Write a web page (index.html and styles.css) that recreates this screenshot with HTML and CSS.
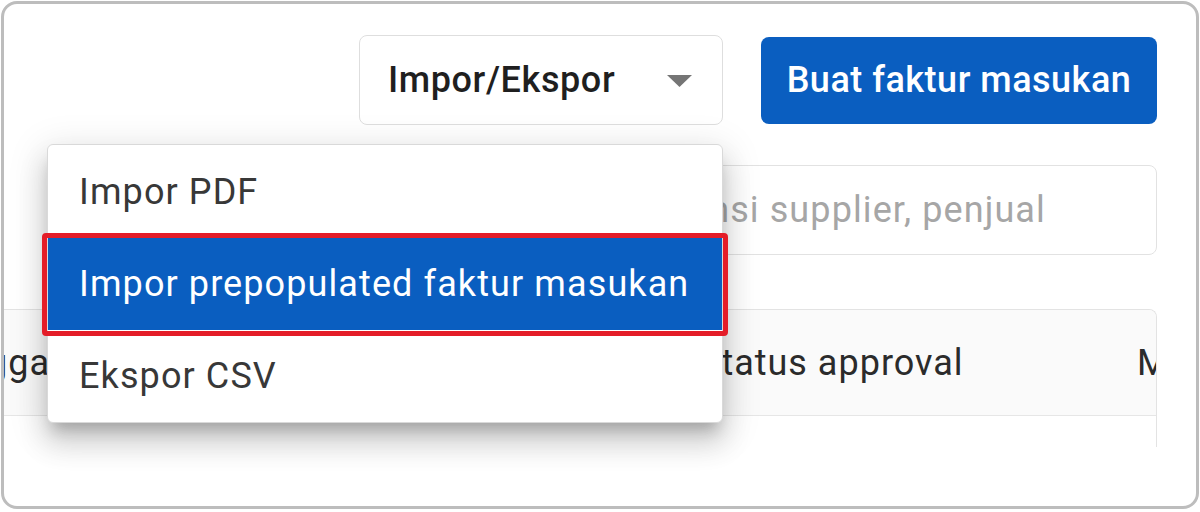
FILE: index.html
```html
<!DOCTYPE html>
<html lang="id">
<head>
<meta charset="utf-8">
<title>Faktur masukan</title>
<link rel="stylesheet" href="styles.css">
</head>
<body>
<div class="frame">
  <div class="toolbar">
    <div class="select">
      <span class="select-label">Impor/Ekspor</span>
      <svg class="caret" width="25" height="12" viewBox="0 0 25 12"><path d="M0 0H25L12.5 12Z" fill="#757575"/></svg>
    </div>
    <button class="primary">Buat faktur masukan</button>
  </div>
  <div class="search-row">
    <input class="search" type="text" placeholder="Cari nomor faktur, referensi supplier, penjual">
  </div>
  <div class="table">
    <div class="table-inner">
      <div class="thead">
        <div class="th">Tanggal</div>
        <div class="th">Nomor faktur</div>
        <div class="th">Status approval</div>
        <div class="th">Metode</div>
      </div>
      <div class="trow">
        <div class="td"></div>
        <div class="td"></div>
        <div class="td"></div>
        <div class="td"></div>
      </div>
    </div>
  </div>
  <ul class="menu">
    <li class="menu-item">Impor PDF</li>
    <li class="menu-item active">Impor prepopulated faktur masukan</li>
    <li class="menu-item">Ekspor CSV</li>
  </ul>
</div>
</body>
</html>
```

FILE: styles.css
```css
* { box-sizing: border-box; }

html, body {
  margin: 0;
  padding: 0;
  background: #ffffff;
}

body {
  font-family: Roboto, "Noto Sans", "Liberation Sans", sans-serif;
  color: #333333;
}

.frame {
  position: relative;
  margin: 1px;
  width: 1198px;
  height: 508px;
  border: 3px solid #bdbdbd;
  border-radius: 16px;
  background: #ffffff;
  overflow: hidden;
  padding-right: 39px;
}

.toolbar {
  display: flex;
  justify-content: flex-end;
  align-items: center;
  gap: 38px;
  padding-top: 31px;
}

.select {
  width: 364px;
  height: 90px;
  border: 1px solid #dedede;
  border-radius: 8px;
  background: #ffffff;
  display: flex;
  align-items: center;
  justify-content: space-between;
  padding: 0 30px 0 28px;
}

.select-label {
  font-size: 36px;
  font-weight: 500;
  letter-spacing: 0.6px;
  color: #1f1f1f;
}

.caret { display: block; margin-top: 2px; }

.primary {
  width: 396px;
  height: 87px;
  border: none;
  border-radius: 8px;
  background: #0a5ec0;
  color: #ffffff;
  font-family: Roboto, "Noto Sans", "Liberation Sans", sans-serif;
  font-size: 36px;
  font-weight: 500;
  letter-spacing: 0.5px;
  padding: 0;
}

.search-row {
  display: flex;
  justify-content: flex-end;
  margin-top: 40px;
}

.search {
  width: 908px;
  height: 90px;
  border: 1px solid #e2e2e2;
  border-radius: 8px;
  padding: 0 0 0 44px;
  font-family: Roboto, "Noto Sans", "Liberation Sans", sans-serif;
  font-size: 36px;
  letter-spacing: 1.1px;
  color: #333333;
  background: #ffffff;
  outline: none;
}

.search::placeholder { color: #a6a6a6; }

.table {
  margin-top: 54px;
  height: 138px;
  border-top: 1px solid #e3e3e3;
  border-right: 1px solid #e3e3e3;
  border-top-right-radius: 8px;
  overflow: hidden;
}

.table-inner {
  margin-left: -103px;
  width: 1600px;
}

.thead, .trow {
  display: grid;
  grid-template-columns: 340px 434px 438px 388px;
}

.thead {
  height: 106px;
  background: #fafafa;
  border-bottom: 1px solid #e6e6e6;
}

.th {
  display: flex;
  align-items: center;
  padding-left: 24px;
  font-size: 36px;
  font-weight: 400;
  letter-spacing: 1px;
  color: #2b2b2b;
  white-space: nowrap;
}

.trow { height: 92px; background: #ffffff; }

.menu {
  position: absolute;
  left: 43px;
  top: 140px;
  width: 676px;
  height: 279px;
  margin: 0;
  padding: 1px 0 0;
  list-style: none;
  background: #ffffff;
  border: 1px solid #d9d9d9;
  border-radius: 6px;
  box-shadow: 0 12px 14px -6px rgba(0,0,0,0.22), 0 20px 28px 3px rgba(0,0,0,0.12), 0 8px 36px 6px rgba(0,0,0,0.10);
}

.menu-item {
  position: relative;
  height: 92px;
  display: flex;
  align-items: center;
  padding-left: 31px;
  font-size: 36px;
  letter-spacing: 1.1px;
  color: #383838;
  white-space: nowrap;
}

.menu-item.active {
  background: #0a5ec0;
  color: #ffffff;
}

.menu-item.active::after {
  content: "";
  position: absolute;
  inset: -5px -6px -6px -6px;
  border: 5px solid #e41d28;
  border-radius: 4px;
}
```
